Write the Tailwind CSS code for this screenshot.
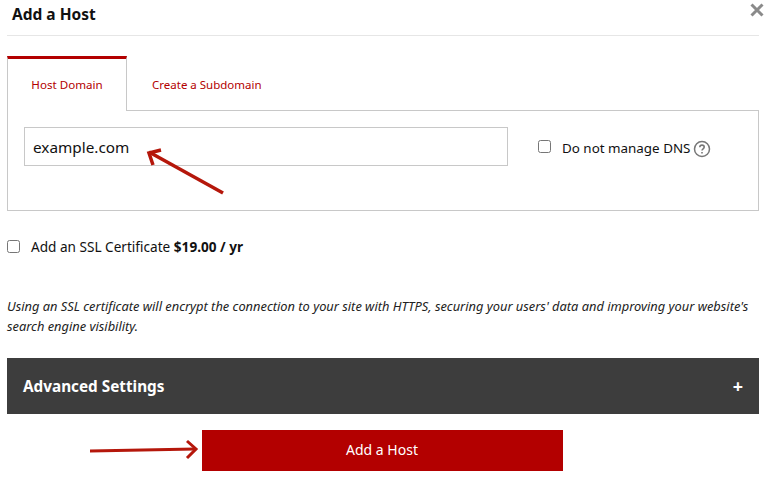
<!DOCTYPE html>
<html lang="en">
<head>
  <meta charset="UTF-8" />
  <title>Add a Host</title>
  <script src="https://cdn.jsdelivr.net/npm/@tailwindcss/browser@4"></script>
</head>
<body class="bg-white font-['Noto_Sans',sans-serif] text-[#111] w-[765px] h-[477px] overflow-hidden relative">
  <div class="pl-[7px] pr-[6px]">
    <!-- header -->
    <div class="h-[36px] border-b border-[#e6e6e6] flex items-center pl-[5px] pb-[6px]">
      <h1 class="text-[15.5px] font-bold leading-none">Add a Host</h1>
    </div>
    <button class="absolute right-[1px] top-[3px] text-[#8a8a8a]">
      <svg width="14" height="14" viewBox="0 0 14 14" fill="none" stroke="currentColor" stroke-width="3"><path d="M1.5 1.5 12.5 12.5M12.5 1.5 1.5 12.5"/></svg>
    </button>

    <!-- tabs -->
    <div class="flex mt-[20px] h-[55px]">
      <div class="w-[120px] border-t-[3px] border-t-[#b30000] border-x border-x-[#c8c8c8] bg-white relative z-10 h-[55px] flex items-center justify-center text-[11.6px] text-[#b30000]">Host Domain</div>
      <div class="flex-1 border-b border-[#c8c8c8] pl-[25px] flex items-center pt-[4px] text-[11.5px] text-[#b30000]">Create a Subdomain</div>
    </div>

    <!-- panel -->
    <div class="h-[101px] -mt-px border border-[#c8c8c8] border-t-0 pt-[17px] pl-[16px] flex items-start">
      <input value="example.com" class="w-[484px] h-[39px] border border-[#c8c8c8] px-[8px] text-[15.3px] text-[#111] outline-none" />
      <label class="flex items-center ml-[30px] mt-[7px] text-[13.4px]">
        <input type="checkbox" class="w-[13px] h-[13px] mr-[11px]" />
        <span class="mt-[4px]">Do not manage DNS</span>
        <svg class="ml-[3px] mt-[6px]" width="18" height="18" viewBox="0 0 18 18" fill="none" stroke="#777"><circle cx="9" cy="9" r="7.5" stroke-width="1.5"/><path d="M6.8 7.2C6.8 5.9 7.8 5.100 9 5.100s2.200.8 2.200 2c0 1.700-2.200 1.700-2.200 3.500" stroke-width="1.600"/><path d="M9 12v1.600" stroke-width="1.600"/></svg>
      </label>
    </div>

    <!-- ssl -->
    <label class="flex items-center mt-[27px] h-[16px] text-[13.6px]">
      <input type="checkbox" class="w-[13px] h-[13px] mr-[11px]" />
      <span class="mt-[2px]">Add an SSL Certificate <b class="font-bold">$19.00 / yr</b></span>
    </label>
    <p class="mt-[42px] text-[12.85px] italic leading-[20px] text-[#222] whitespace-nowrap">Using an SSL certificate will encrypt the connection to your site with HTTPS, securing your users' data and improving your website's<br/>search engine visibility.</p>

    <!-- advanced settings -->
    <div class="mt-[22px] h-[56px] bg-[#3d3d3d] text-white flex items-center justify-between pl-[16px] pr-[16px]">
      <span class="text-[15.3px] font-bold">Advanced Settings</span>
      <span class="text-[18px] font-bold leading-none">+</span>
    </div>

    <div class="mt-[16px] flex justify-center pr-[1px]">
      <button class="w-[361px] h-[41px] pb-[2px] bg-[#b30000] text-white text-[14px] ml-[-1px]">Add a Host</button>
    </div>
  </div>

  <!-- annotation arrows -->
  <svg class="absolute left-0 top-0 pointer-events-none" width="765" height="477" fill="none" stroke="#b5170b">
    <path d="M223 193 149 152" stroke-width="3.500"/>
    <path d="M161 150 149 153 153 165" stroke-width="3.500"/>
    <path d="M90 451 195 449" stroke-width="3"/>
    <path d="M187 441 196 449 187 458" stroke-width="3"/>
  </svg>
</body>
</html>
